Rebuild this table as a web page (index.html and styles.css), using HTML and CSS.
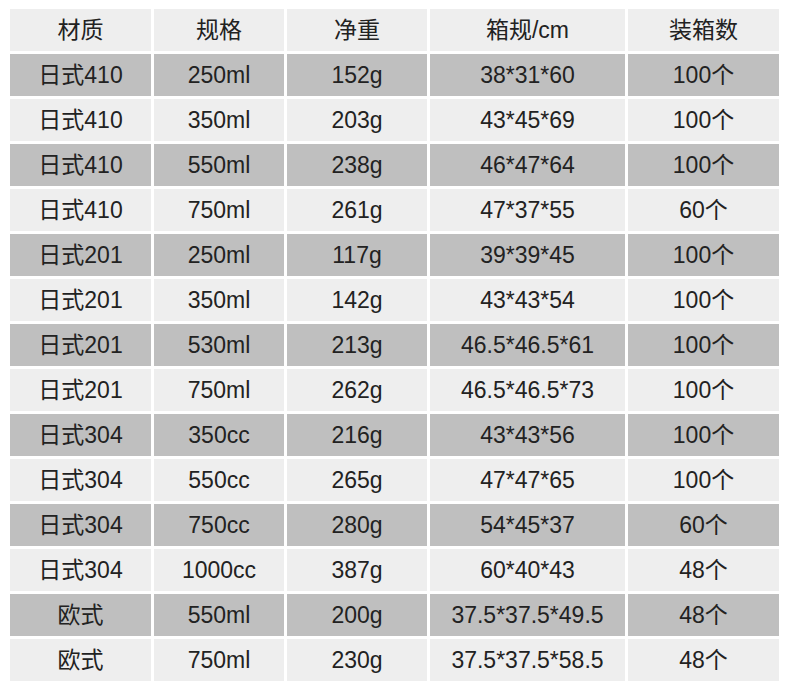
FILE: index.html
```html
<!DOCTYPE html>
<html lang="zh">
<head>
<meta charset="utf-8">
<link rel="stylesheet" href="styles.css">
</head>
<body>
<div class="spec-table">
  <div class="row head"><div>材质</div><div>规格</div><div>净重</div><div>箱规/cm</div><div>装箱数</div></div>
  <div class="row dark"><div>日式410</div><div>250ml</div><div>152g</div><div>38*31*60</div><div>100个</div></div>
  <div class="row light"><div>日式410</div><div>350ml</div><div>203g</div><div>43*45*69</div><div>100个</div></div>
  <div class="row dark"><div>日式410</div><div>550ml</div><div>238g</div><div>46*47*64</div><div>100个</div></div>
  <div class="row light"><div>日式410</div><div>750ml</div><div>261g</div><div>47*37*55</div><div>60个</div></div>
  <div class="row dark"><div>日式201</div><div>250ml</div><div>117g</div><div>39*39*45</div><div>100个</div></div>
  <div class="row light"><div>日式201</div><div>350ml</div><div>142g</div><div>43*43*54</div><div>100个</div></div>
  <div class="row dark"><div>日式201</div><div>530ml</div><div>213g</div><div>46.5*46.5*61</div><div>100个</div></div>
  <div class="row light"><div>日式201</div><div>750ml</div><div>262g</div><div>46.5*46.5*73</div><div>100个</div></div>
  <div class="row dark"><div>日式304</div><div>350cc</div><div>216g</div><div>43*43*56</div><div>100个</div></div>
  <div class="row light"><div>日式304</div><div>550cc</div><div>265g</div><div>47*47*65</div><div>100个</div></div>
  <div class="row dark"><div>日式304</div><div>750cc</div><div>280g</div><div>54*45*37</div><div>60个</div></div>
  <div class="row light"><div>日式304</div><div>1000cc</div><div>387g</div><div>60*40*43</div><div>48个</div></div>
  <div class="row dark"><div>欧式</div><div>550ml</div><div>200g</div><div>37.5*37.5*49.5</div><div>48个</div></div>
  <div class="row light"><div>欧式</div><div>750ml</div><div>230g</div><div>37.5*37.5*58.5</div><div>48个</div></div>
</div>
</body>
</html>
```

FILE: styles.css
```css
html, body {
  margin: 0;
  padding: 0;
  background: #ffffff;
}
body {
  padding: 9px 0 0 10px;
  font-family: "Liberation Sans", "Noto Sans CJK SC", sans-serif;
  font-size: 23px;
  line-height: 1;
  color: #222222;
}
.spec-table {
  display: flex;
  flex-direction: column;
  gap: 3px;
  width: 769px;
}
.row {
  display: grid;
  grid-template-columns: 141px 130px 140px 195px 151px;
  column-gap: 3px;
  height: 42px;
}
.row > div {
  display: flex;
  align-items: center;
  justify-content: center;
  white-space: nowrap;
}
.head > div, .light > div {
  background: #eeeeee;
}
.dark > div {
  background: #bfbfbf;
}
```
